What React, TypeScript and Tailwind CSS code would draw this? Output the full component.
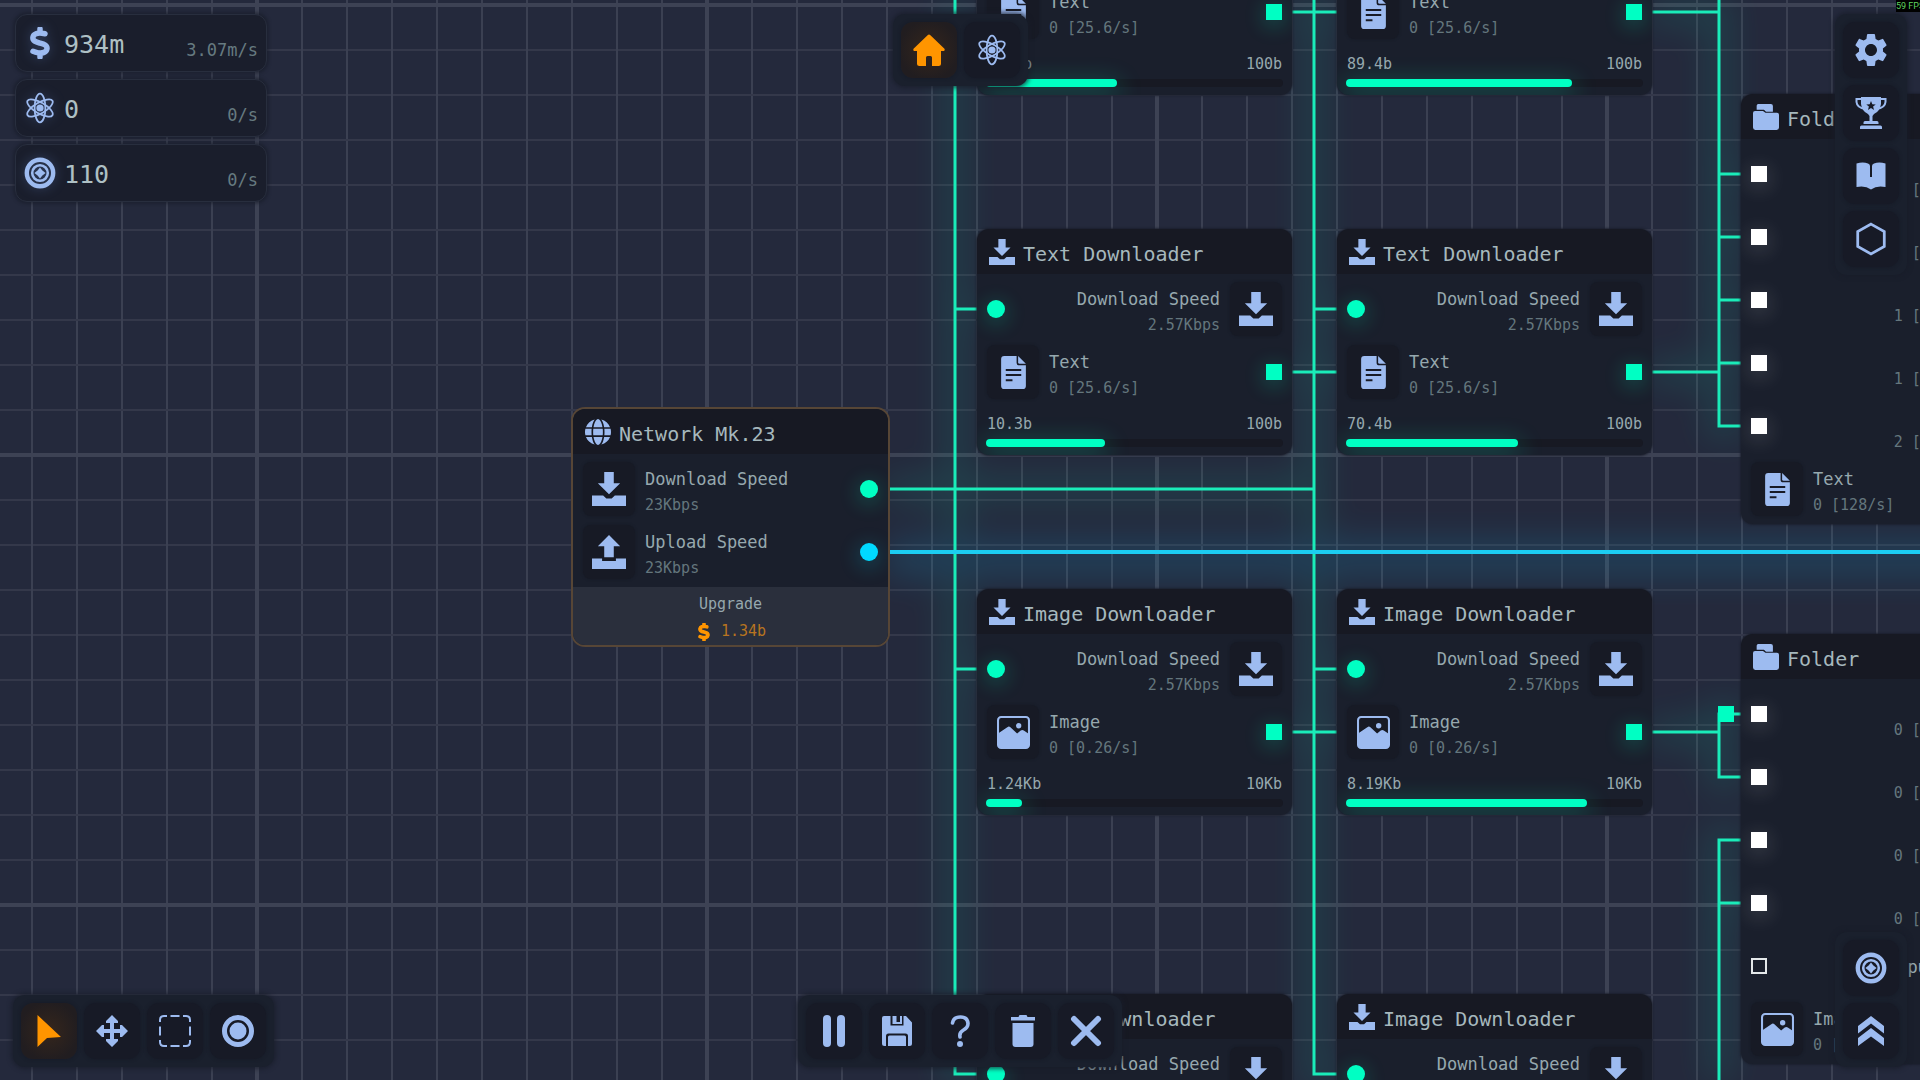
import type { ReactNode } from 'react';
import { FaDollarSign, FaGlobe } from 'react-icons/fa6';
import { MdSettings } from 'react-icons/md';

type IconProps = { className?: string };

function Svg({ className, children }: { className?: string; children: ReactNode }) {
    return (
        <svg viewBox="0 0 32 32" className={className} fill="currentColor" aria-hidden="true">
            {children}
        </svg>
    );
}

function AtomIcon({ className }: IconProps) {
    return (
        <Svg className={className}>
            <g fill="none" stroke="currentColor" strokeWidth="1.8">
                <ellipse cx="16" cy="16" rx="5.4" ry="14.4" />
                <ellipse cx="16" cy="16" rx="5.4" ry="14.4" transform="rotate(60 16 16)" />
                <ellipse cx="16" cy="16" rx="5.4" ry="14.4" transform="rotate(120 16 16)" />
            </g>
            <circle cx="16" cy="16" r="3.6" />
        </Svg>
    );
}

function TokenIcon({ className }: IconProps) {
    return (
        <Svg className={className}>
            <circle cx="16" cy="16" r="13.2" fill="none" stroke="currentColor" strokeWidth="4.4" />
            <circle cx="16" cy="16" r="7.8" fill="none" stroke="currentColor" strokeWidth="2.6" />
            <path d="M16 10.4 18.4 13.6 21.6 16 18.4 18.4 16 21.6 13.6 18.4 10.4 16 13.6 13.6z" />
        </Svg>
    );
}

function HomeIcon({ className }: IconProps) {
    return (
        <Svg className={className}>
            <path d="M14.6 1.2a2 2 0 0 1 2.8 0L31.2 14.6c1 1 .4 2.4-.9 2.4H28v12.500q0 2.500-2.500 2.500H19V23.5q0-1.500-1.500-1.500h-3q-1.500 0-1.500 1.500V32H6.500Q4 32 4 29.500V17H1.700c-1.300 0-1.900-1.400-.9-2.400z" />
        </Svg>
    );
}

function DownloadIcon({ className }: IconProps) {
    return (
        <Svg className={className}>
            <path d="M11.5 0h9v10.5h6L16 21 5.5 10.5h6z" />
            <path d="M0 22h10.5l3 3h5l3-3H32v10H0z" />
        </Svg>
    );
}

function UploadIcon({ className }: IconProps) {
    return (
        <Svg className={className}>
            <path d="M16 0 26.5 10.5h-6V21h-9V10.5h-6z" />
            <path d="M0 22h9.5v2.5h13V22H32v10H0z" />
        </Svg>
    );
}

function FileIcon({ className }: IconProps) {
    return (
        <Svg className={className}>
            <path
                fillRule="evenodd"
                d="M7 0h12v6.5q0 2.5 2.5 2.5H28v20q0 3-3 3H7q-3 0-3-3V3q0-3 3-3zM8.5 12.5v2h15v-2zM8.5 17.5v2h15v-2zM8.5 22.5v2H15v-2z"
            />
            <path d="M20.5 0 28 7.5h-6q-1.5 0-1.5-1.5z" />
        </Svg>
    );
}

function ImageIcon({ className }: IconProps) {
    return (
        <Svg className={className}>
            <rect x="1" y="1" width="30" height="30" rx="3" fill="none" stroke="currentColor" strokeWidth="2" />
            <circle cx="21" cy="9.5" r="2.6" />
            <path d="M1 17 10 10.800Q11.500 9.800 13 10.800L19.500 17 23 14Q24.500 13 26 14L31 17.500V28q0 3-3 3H4q-3 0-3-3z" />
        </Svg>
    );
}

function FolderIcon({ className }: IconProps) {
    return (
        <Svg className={className}>
            <path d="M4.500 7V2q0-2 2-2H22q2.500 0 2.500 2.500V9.500H16L13.500 7z" />
            <path d="M2.500 8.500h9.800l3 2.300H29.500q2.500 0 2.500 2.500V29q0 3-3 3H3q-3 0-3-3V11q0-2.500 2.500-2.500z" />
        </Svg>
    );
}

function TrophyIcon({ className }: IconProps) {
    return (
        <Svg className={className}>
            <path d="M8 2H1.500v3q.5 6 9 7M24 2h6.500v3q-.5 6-9 7" fill="none" stroke="currentColor" strokeWidth="2" />
            <path
                fillRule="evenodd"
                d="M6 0h20v7q-1 7.500-7 10l-1.500 2v5h4.500q1.500 0 1.500 1.500V27H8.500v-1.500Q8.500 24 10 24h4.500v-5L13 17Q7 14.500 6 7zM16 4l-1.300 3.200-3.400.2 2.600 2.200-.9 3.400 3-1.900 3 1.900-.9-3.400 2.600-2.200-3.400-.2z"
            />
            <path d="M6.500 28.500h19q1.500 0 1.500 1.500v2H5v-2q0-1.500 1.500-1.500z" />
        </Svg>
    );
}

function BookIcon({ className }: IconProps) {
    return (
        <Svg className={className}>
            <path d="M1.500 3.500Q8 1.500 13 3.500q2 .8 2 2.500V17h2V6q0-1.700 2-2.500 5-2 11.500 0v23.500Q22 25 16 29.500 10 25 1.500 27z" />
        </Svg>
    );
}

function HexagonIcon({ className }: IconProps) {
    return (
        <Svg className={className}>
            <path d="M16 2 28.500 9v14L16 30 3.500 23V9z" fill="none" stroke="currentColor" strokeWidth="2.6" />
        </Svg>
    );
}

function ChevronsIcon({ className }: IconProps) {
    return (
        <Svg className={className}>
            <path d="M16 1 29 11v7.500L16 8.500 3 18.500V11z" />
            <path d="M16 13 29 23v8L16 21.500 3 31v-8z" />
        </Svg>
    );
}

function PointerIcon({ className }: IconProps) {
    return (
        <Svg className={className}>
            <path d="M4.500 0 28 22 14 23 4.500 32z" />
        </Svg>
    );
}

function MoveIcon({ className }: IconProps) {
    return (
        <Svg className={className}>
            <path d="M16 0l6 6v2h-4v6h6v-4h2l6 6-6 6h-2v-4h-6v6h4v2l-6 6-6-6v-2h4v-6H8v4H6L0 16l6-6h2v4h6V8h-4V6z" />
        </Svg>
    );
}

function SelectIcon({ className }: IconProps) {
    return (
        <Svg className={className}>
            <path
                d="M1 7V5q0-4 4-4h3M11.5 1h9M24 1h3q4 0 4 4v2M31 11.5v9M31 25v2q0 4-4 4h-3M20.5 31h-9M8 31H5q-4 0-4-4v-2M1 20.5v-9"
                fill="none"
                stroke="currentColor"
                strokeWidth="2"
            />
        </Svg>
    );
}

function RecordIcon({ className }: IconProps) {
    return (
        <Svg className={className}>
            <circle cx="16" cy="16" r="13.5" fill="none" stroke="currentColor" strokeWidth="5" />
            <circle cx="16" cy="16" r="8.5" />
        </Svg>
    );
}

function PauseIcon({ className }: IconProps) {
    return (
        <Svg className={className}>
            <rect x="5" y="0" width="8" height="32" rx="4" />
            <rect x="19" y="0" width="8" height="32" rx="4" />
        </Svg>
    );
}

function SaveIcon({ className }: IconProps) {
    return (
        <Svg className={className}>
            <path d="M3 1h6.500v9.500h13V1H25l6 6.500V28.500q0 2.500-2.500 2.500H27V21q0-2.500-2.500-2.500h-17Q5 18.500 5 21v10H3.500Q1 31 1 28.500V3q0-2 2-2z" />
            <path d="M11.500 1h4v6H19V1h2v8h-9.500zM8.500 20.500h15q1.500 0 1.500 1.500v9H7v-9q0-1.500 1.500-1.500z" />
        </Svg>
    );
}

function HelpIcon({ className }: IconProps) {
    return (
        <Svg className={className}>
            <path d="M8.500 8q1-6 8-6t7.500 6.500q0 4-4.500 6.500T16 22" fill="none" stroke="currentColor" strokeWidth="3.6" strokeLinecap="round" />
            <circle cx="16" cy="29" r="3" />
        </Svg>
    );
}

function TrashIcon({ className }: IconProps) {
    return (
        <Svg className={className}>
            <path d="M4 2h7.500L12.500 0h7l1 2H28v3.500H4z" />
            <path d="M5.500 8h21v21q0 3-3 3h-15q-3 0-3-3z" />
        </Svg>
    );
}

function CloseIcon({ className }: IconProps) {
    return (
        <Svg className={className}>
            <path d="M4 4 28 28M28 4 4 28" fill="none" stroke="currentColor" strokeWidth="6" strokeLinecap="round" />
        </Svg>
    );
}

// HUD

function Stat({ label, icon, value, rate }: { label: string; icon: ReactNode; value: string; rate: string }) {
    return (
        <div
            aria-label={label}
            className="flex h-[58px] items-center rounded-xl border border-[#282e3e] bg-[#1a1e2c] px-2 shadow-[0_0_3px_2px_rgba(22,26,38,0.5)]"
        >
            <span className="flex w-8 justify-center text-[#9dbbf0] drop-shadow-[0_0_6px_rgba(110,150,230,0.3)]">{icon}</span>
            <span className="ml-2 pt-1 text-[25px] text-[#aec0c4]">{value}</span>
            <span className="ml-auto pt-4 text-[17px] text-[#667a80]">{rate}</span>
        </div>
    );
}

function Toolbar({ label, vertical, children }: { label: string; vertical?: boolean; children: ReactNode }) {
    return (
        <div
            role="toolbar"
            aria-label={label}
            className={`pointer-events-auto flex gap-[7px] rounded-xl bg-[#1a202d] p-2 shadow-[0_0_4px_2px_rgba(24,29,42,0.7)] ${vertical ? 'flex-col' : ''}`}
        >
            {children}
        </div>
    );
}

function ToolButton({ label, active, children }: { label: string; active?: boolean; children: ReactNode }) {
    return (
        <button
            type="button"
            aria-label={label}
            aria-pressed={active}
            className={`flex size-14 items-center justify-center rounded-xl shadow-[0_0_3px_1px_rgba(22,25,36,0.6)] ${
                active
                    ? 'bg-[radial-gradient(circle,#35261c_0%,#211d20_75%)] text-[#ff9500]'
                    : 'bg-[#171a26] text-[#9dbbf0] hover:bg-[#1d2130]'
            }`}
        >
            {children}
        </button>
    );
}

// Canvas nodes

type PortKind = 'download' | 'upload' | 'file' | 'any' | 'empty';

function Port({ kind }: { kind: PortKind }) {
    if (kind === 'download') {
        return <span className="size-[18px] shrink-0 rounded-full bg-[#00ffc3] shadow-[0_4px_20px_2px_rgba(0,255,195,0.22)]" />;
    }
    if (kind === 'upload') {
        return <span className="size-[18px] shrink-0 rounded-full bg-[#00d9ff] shadow-[0_4px_20px_2px_rgba(0,217,255,0.22)]" />;
    }
    if (kind === 'file') {
        return <span className="size-4 shrink-0 bg-[#00ffc3] shadow-[0_4px_20px_2px_rgba(0,255,195,0.22)]" />;
    }
    if (kind === 'any') {
        return <span className="size-4 shrink-0 bg-white shadow-[0_4px_20px_2px_rgba(255,255,255,0.15)]" />;
    }
    return <span className="size-4 shrink-0 border-2 border-[#e4e8ea]" />;
}

function Node({ x, y, title, icon, selected, children }: {
    x: number;
    y: number;
    title: string;
    icon: ReactNode;
    selected?: boolean;
    children: ReactNode;
}) {
    return (
        <section
            className={`absolute w-[315px] overflow-hidden rounded-xl bg-[#1a1f2c] ${
                selected ? 'ring-2 ring-[#574636]' : 'shadow-[0_0_2px_1px_rgba(26,30,43,0.8)]'
            }`}
            style={{ left: x, top: y }}
        >
            <header className="flex h-[45px] items-center gap-2 bg-[#171923] px-3">
                <span className="text-[#9dbbf0]">{icon}</span>
                <h2 className="pt-1 text-xl whitespace-nowrap text-[#a6b8bd]">{title}</h2>
            </header>
            {children}
        </section>
    );
}

function Rows({ children }: { children: ReactNode }) {
    return <div className="flex flex-col gap-[9px] px-[10px] pt-2">{children}</div>;
}

function Row({ label, value, icon, port, input }: {
    label: string;
    value: string;
    icon: ReactNode;
    port?: PortKind;
    input?: boolean;
}) {
    return (
        <div className={`flex h-[54px] items-center gap-[10px] ${input ? 'flex-row-reverse' : ''}`}>
            <span className="flex h-[54px] w-[52px] shrink-0 items-center justify-center rounded-lg bg-[#171a25] text-[#9dbbf0] shadow-[0_0_2px_1px_rgba(22,25,36,0.5)]">
                {icon}
            </span>
            <div className={`grow pt-[5px] leading-[26px] whitespace-nowrap ${input ? 'text-right' : ''}`}>
                <div className="text-[17px] text-[#96a8ae]">{label}</div>
                <div className="text-[15px] text-[#64767d]">{value}</div>
            </div>
            {port && <Port kind={port} />}
        </div>
    );
}

type DownloaderProps = {
    x: number;
    y: number;
    kind: 'Text' | 'Image';
    rate: string;
    amount: string;
    total: string;
    progress: number;
};

function Downloader({ x, y, kind, rate, amount, total, progress }: DownloaderProps) {
    return (
        <Node x={x} y={y} title={`${kind} Downloader`} icon={<DownloadIcon className="size-[26px]" />}>
            <Rows>
                <Row input label="Download Speed" value="2.57Kbps" icon={<DownloadIcon className="size-[34px]" />} port="download" />
                <Row
                    label={kind}
                    value={`0 [${rate}/s]`}
                    icon={kind === 'Text' ? <FileIcon className="size-[33px]" /> : <ImageIcon className="size-[33px]" />}
                    port="file"
                />
            </Rows>
            <div className="mt-3.5 flex justify-between px-[10px] text-[15px] leading-[22px] text-[#96a8ae]">
                <span>{amount}</span>
                <span>{total}</span>
            </div>
            <div
                role="progressbar"
                aria-label={`${kind} download`}
                aria-valuenow={progress}
                className="mx-[9px] mt-1 mb-2 h-2 rounded-full bg-[#171923]"
            >
                <div
                    className="h-2 rounded-full bg-[#00ffc3] shadow-[0_6px_24px_4px_rgba(0,255,195,0.22)]"
                    style={{ width: `${progress}%` }}
                />
            </div>
        </Node>
    );
}

type FolderProps = {
    x: number;
    y: number;
    kind: 'Text' | 'Image';
    inputs: string[];
    total: string;
    open?: boolean;
};

function Folder({ x, y, kind, inputs, total, open }: FolderProps) {
    const icon = kind === 'Text' ? <FileIcon className="size-[33px]" /> : <ImageIcon className="size-[33px]" />;
    return (
        <Node x={x} y={y} title="Folder" icon={<FolderIcon className="size-[26px]" />}>
            <Rows>
                {inputs.map((value, i) => (
                    <Row key={i} input label={kind} value={value} icon={icon} port="any" />
                ))}
                {open && (
                    <div className="flex h-[54px] items-center">
                        <Port kind="empty" />
                        <span className="grow pt-1 pl-3 text-center text-[17px] text-[#96a8ae]">Input</span>
                    </div>
                )}
                <Row label={kind} value={total} icon={icon} />
            </Rows>
            <div className="h-2" />
        </Node>
    );
}

const downloaders: DownloaderProps[] = [
    { x: 977, y: -131, kind: 'Text', rate: '25.6', amount: '44.2b', total: '100b', progress: 44 },
    { x: 1337, y: -131, kind: 'Text', rate: '25.6', amount: '89.4b', total: '100b', progress: 76 },
    { x: 977, y: 229, kind: 'Text', rate: '25.6', amount: '10.3b', total: '100b', progress: 40 },
    { x: 1337, y: 229, kind: 'Text', rate: '25.6', amount: '70.4b', total: '100b', progress: 58 },
    { x: 977, y: 589, kind: 'Image', rate: '0.26', amount: '1.24Kb', total: '10Kb', progress: 12 },
    { x: 1337, y: 589, kind: 'Image', rate: '0.26', amount: '8.19Kb', total: '10Kb', progress: 81 },
    { x: 977, y: 994, kind: 'Image', rate: '0.26', amount: '3.1Kb', total: '10Kb', progress: 31 },
    { x: 1337, y: 994, kind: 'Image', rate: '0.26', amount: '5.2Kb', total: '10Kb', progress: 52 },
];

const downloadWires = [
    'M955 0V1074H977M955 309H977M955 669H977',
    'M1314 0V1074H1337M1314 309H1337M1314 669H1337M888 489H1314',
    'M1291 12H1337M1291 372H1337M1291 732H1337',
    'M1651 12H1719M1651 372H1719M1719 0V426H1741M1719 174H1741M1719 237H1741M1719 300H1741M1719 363H1741',
    'M1651 732H1719M1741 714H1719V777H1741',
    'M1719 1080V840H1741M1719 903H1741',
];

function Wires() {
    return (
        <svg className="absolute inset-0 size-full" fill="none" aria-hidden="true">
            <defs>
                <pattern id="grid" x="255" y="3" width="450" height="450" patternUnits="userSpaceOnUse">
                    {Array.from({ length: 9 }, (_, i) => (
                        <g key={i} strokeWidth="2">
                            <path d={`M0 ${(i + 1) * 45 + 2}H450`} stroke="#34384a" />
                            <path d={`M${(i + 1) * 45 + 2} 0V450`} stroke="#3b4052" />
                        </g>
                    ))}
                    <path d="M2 0V450M0 2H450" stroke="#3d4254" strokeWidth="4" />
                </pattern>
            </defs>
            <rect width="100%" height="100%" fill="url(#grid)" />
            <g className="opacity-15 blur-lg" strokeWidth="24">
                <path d={downloadWires.join('')} stroke="#13c4a2" />
                <path d="M888 558H4000" stroke="#12b5ea" strokeWidth="40" />
            </g>
            <path d={downloadWires.join('')} stroke="#1aecb9" strokeWidth="3" />
            <path d="M888 552H4000" stroke="#1ccdf2" strokeWidth="4" />
            <rect x="1718" y="706" width="16" height="16" fill="#00ffc3" />
        </svg>
    );
}

export default function App() {
    return (
        <main className="relative h-screen w-full overflow-hidden bg-[#24293c] font-['DejaVu_Sans_Mono','Liberation_Mono',monospace]">
            <Wires />

            {downloaders.map((d) => (
                <Downloader key={`${d.x}-${d.y}`} {...d} />
            ))}

            <Node x={573} y={409} title="Network Mk.23" selected icon={<FaGlobe className="size-[26px]" />}>
                <Rows>
                    <Row label="Download Speed" value="23Kbps" icon={<DownloadIcon className="size-[34px]" />} port="download" />
                    <Row label="Upload Speed" value="23Kbps" icon={<UploadIcon className="size-[34px]" />} port="upload" />
                </Rows>
                <button type="button" className="mt-2 block w-full bg-[#2a2f3c] pt-1 text-[15px] leading-[27px]">
                    <span className="block text-[#96a8ae]">Upgrade</span>
                    <span className="flex items-center justify-center gap-2 text-[#b87420]">
                        <FaDollarSign className="size-[18px] stroke-current text-[#ff9500]" strokeWidth={40} />
                        1.34b
                    </span>
                </button>
            </Node>

            <Folder
                x={1741}
                y={94}
                kind="Text"
                inputs={['0 [25.6/s]', '0 [25.6/s]', '1 [25.6/s]', '1 [25.6/s]', '2 [25.6/s]']}
                total="0 [128/s]"
            />
            <Folder
                x={1741}
                y={634}
                kind="Image"
                inputs={['0 [0.26/s]', '0 [0.26/s]', '0 [0.26/s]', '0 [0.26/s]']}
                total="0 [1.04/s]"
                open
            />

            <div className="pointer-events-none absolute inset-0 flex flex-col justify-between px-[13px] pt-3.5 pb-[13px]">
                <div className="grid grid-cols-[1fr_auto_1fr] items-start">
                    <div className="flex w-[254px] flex-col gap-[7px] pl-0.5">
                        <Stat label="Money" icon={<FaDollarSign className="size-8 stroke-current" strokeWidth={24} />} value="934m" rate="3.07m/s" />
                        <Stat label="Research" icon={<AtomIcon className="size-8" />} value="0" rate="0/s" />
                        <Stat label="Tokens" icon={<TokenIcon className="size-8" />} value="110" rate="0/s" />
                    </div>
                    <Toolbar label="Views">
                        <ToolButton label="Home" active><HomeIcon className="size-8" /></ToolButton>
                        <ToolButton label="Research"><AtomIcon className="size-8" /></ToolButton>
                    </Toolbar>
                    <div className="flex justify-end">
                        <Toolbar label="Menu" vertical>
                            <ToolButton label="Settings"><MdSettings className="size-10" /></ToolButton>
                            <ToolButton label="Achievements"><TrophyIcon className="size-8" /></ToolButton>
                            <ToolButton label="Guide"><BookIcon className="size-8" /></ToolButton>
                            <ToolButton label="Schematics"><HexagonIcon className="size-[34px]" /></ToolButton>
                        </Toolbar>
                    </div>
                </div>
                <div className="grid grid-cols-[1fr_auto_1fr] items-end">
                    <div className="flex">
                        <Toolbar label="Tools">
                            <ToolButton label="Select" active><PointerIcon className="size-8" /></ToolButton>
                            <ToolButton label="Move"><MoveIcon className="size-8" /></ToolButton>
                            <ToolButton label="Box select"><SelectIcon className="size-8" /></ToolButton>
                            <ToolButton label="Connect"><RecordIcon className="size-8" /></ToolButton>
                        </Toolbar>
                    </div>
                    <Toolbar label="Actions">
                        <ToolButton label="Pause"><PauseIcon className="size-8" /></ToolButton>
                        <ToolButton label="Save"><SaveIcon className="size-8" /></ToolButton>
                        <ToolButton label="Help"><HelpIcon className="size-8" /></ToolButton>
                        <ToolButton label="Delete"><TrashIcon className="size-8" /></ToolButton>
                        <ToolButton label="Close"><CloseIcon className="size-8" /></ToolButton>
                    </Toolbar>
                    <div className="flex justify-end">
                        <Toolbar label="Upgrades" vertical>
                            <ToolButton label="Tokens"><TokenIcon className="size-8" /></ToolButton>
                            <ToolButton label="Expand"><ChevronsIcon className="size-8" /></ToolButton>
                        </Toolbar>
                    </div>
                </div>
            </div>

            <div className="absolute top-0 right-0 w-6 overflow-hidden bg-black font-['Roboto',sans-serif] text-[9px] leading-3 whitespace-nowrap text-[#5fd35f]">
                59 FPS
            </div>
        </main>
    );
}
